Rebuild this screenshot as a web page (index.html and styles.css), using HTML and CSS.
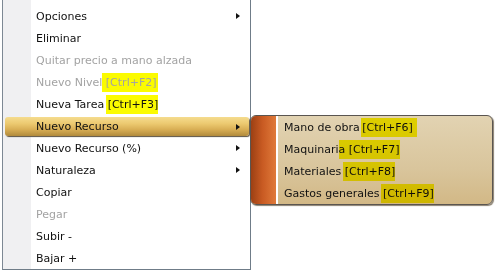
FILE: index.html
```html
<!DOCTYPE html>
<html>
<head>
<meta charset="utf-8">
<link rel="stylesheet" href="styles.css">
</head>
<body>
<div class="stage">
  <div class="menu">
    <div class="item"><span class="label">Opciones</span><span class="arrow"></span></div>
    <div class="item"><span class="label">Eliminar</span></div>
    <div class="item disabled"><span class="label">Quitar precio a mano alzada</span></div>
    <div class="item disabled"><span class="label">Nuevo Nivel <mark class="hl hl-a">[Ctrl+F2]</mark></span></div>
    <div class="item"><span class="label">Nueva Tarea <mark class="hl hl-b">[Ctrl+F3]</mark></span></div>
    <div class="item active"><span class="label">Nuevo Recurso</span><span class="arrow"></span></div>
    <div class="item"><span class="label">Nuevo Recurso (%)</span><span class="arrow"></span></div>
    <div class="item"><span class="label">Naturaleza</span><span class="arrow"></span></div>
    <div class="item"><span class="label">Copiar</span></div>
    <div class="item disabled"><span class="label">Pegar</span></div>
    <div class="item"><span class="label">Subir -</span></div>
    <div class="item"><span class="label">Bajar +</span></div>
  </div>
  <div class="submenu">
    <div class="strip"></div>
    <div class="subitems">
      <div class="subitem">Mano de obra <mark class="hl hl-c">[Ctrl+F6]</mark></div>
      <div class="subitem">Maquinari<mark class="hl hl-d">a [Ctrl+F7]</mark></div>
      <div class="subitem">Materiales <mark class="hl hl-e">[Ctrl+F8]</mark></div>
      <div class="subitem">Gastos generales <mark class="hl hl-f">[Ctrl+F9]</mark></div>
    </div>
  </div>
</div>
</body>
</html>
```
FILE: styles.css
```css
html, body {
  margin: 0;
  padding: 0;
  background: #ffffff;
}
body {
  font-family: "DejaVu Sans", Verdana, sans-serif;
  font-size: 11px;
  color: #111111;
}
.stage {
  position: relative;
  width: 495px;
  height: 275px;
}
.menu {
  margin-left: 2px;
  width: 247px;
  padding-top: 5px;
  border-left: 1px solid #7d8894;
  border-right: 1px solid #6f7c88;
  border-bottom: 1px solid #6f7c88;
  background: linear-gradient(to right, #f0f0f2 0, #f0f0f2 28px, #ffffff 28px);
}
.item {
  height: 22px;
  display: flex;
  align-items: center;
  padding-left: 33px;
  padding-right: 10px;
  box-sizing: border-box;
}
.item .label {
  flex: 1;
  white-space: nowrap;
}
.disabled {
  color: #a3a3a3;
}
.arrow {
  width: 0;
  height: 0;
  border-top: 3.5px solid transparent;
  border-bottom: 3.5px solid transparent;
  border-left: 4px solid #111;
}
.active {
  margin: 2px 1px 1px 2px;
  height: 19px;
  padding-left: 31px;
  padding-right: 9px;
  border-radius: 3px;
  background: linear-gradient(to bottom, #f5dc8e 0%, #ecc970 35%, #d9af55 65%, #b18a3c 100%);
  box-shadow: 1px 1px 1px #5a5040;
}
.hl {
  color: inherit;
  background: #fbfb00;
  padding: 3px 0 3px;
}
.hl-a { margin-left: -4px; padding-left: 4px; padding-right: 1px; }
.hl-b { margin-left: -2px; padding-left: 2px; padding-right: 0; }
.hl-c { padding-left: 1px; padding-right: 4px; margin-left: -2px; }
.hl-d { padding-right: 1px; }
.hl-e { margin-left: -2px; padding-left: 2px; }
.hl-f { margin-left: -2px; padding-left: 2px; }
.submenu {
  position: absolute;
  left: 250px;
  top: 115px;
  width: 241px;
  height: 88px;
  display: flex;
  border: 1px solid #5a5550;
  border-radius: 6px;
  overflow: hidden;
  background: linear-gradient(to bottom, #e2d3b2 0%, #d9c59c 60%, #d2b886 100%);
  box-shadow: 1px 1px 1px #8a8070;
}
.strip {
  width: 25px;
  background: linear-gradient(to right, #9c4014 0%, #c85a22 45%, #e07a3a 100%);
  border-right: 2px solid #ffffff;
}
.subitems {
  padding-left: 6px;
  display: flex;
  flex-direction: column;
}
.subitem {
  height: 22px;
  display: flex;
  align-items: center;
  white-space: pre;
}
.subitem .hl {
  mix-blend-mode: multiply;
}
```
